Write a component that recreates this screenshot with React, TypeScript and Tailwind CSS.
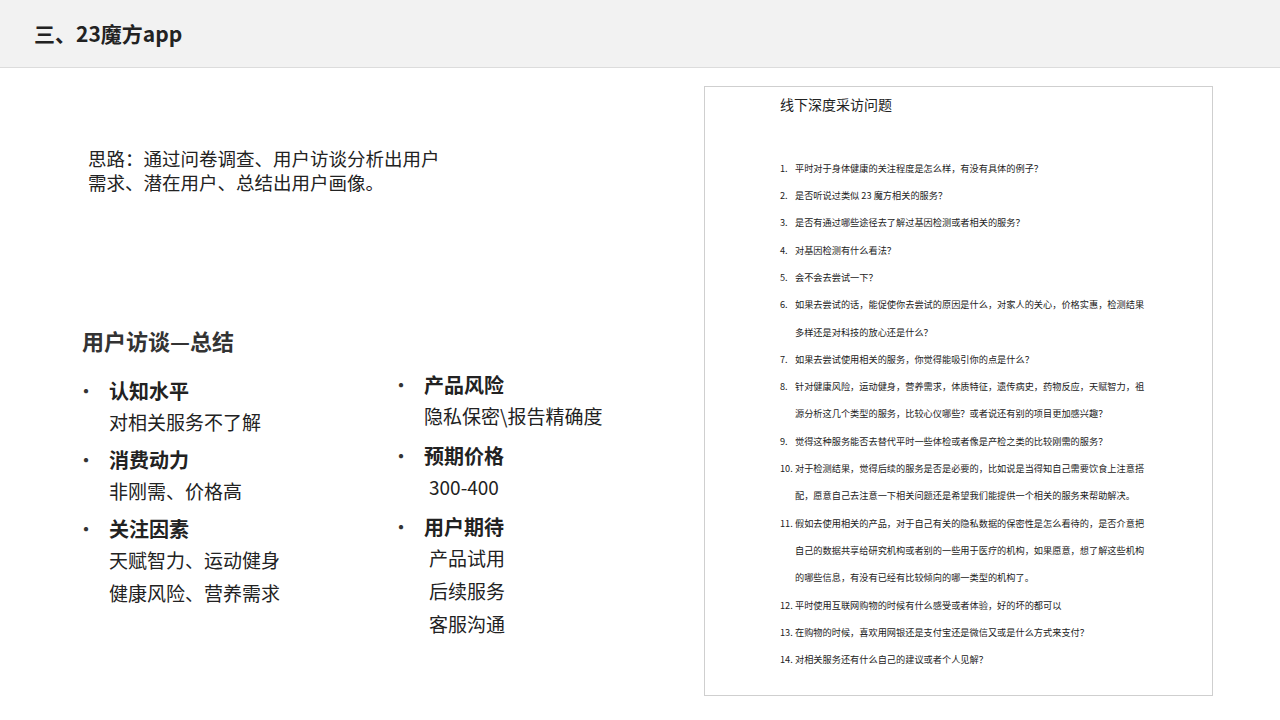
import React from "react";

const font = { fontFamily: '"Microsoft YaHei","Noto Sans CJK SC",sans-serif' };

type Q = { n: string; lines: string[] };

const questions: Q[] = [
  { n: "1.", lines: ["平时对于身体健康的关注程度是怎么样，有没有具体的例子？"] },
  { n: "2.", lines: ["是否听说过类似 23 魔方相关的服务？"] },
  { n: "3.", lines: ["是否有通过哪些途径去了解过基因检测或者相关的服务？"] },
  { n: "4.", lines: ["对基因检测有什么看法？"] },
  { n: "5.", lines: ["会不会去尝试一下？"] },
  { n: "6.", lines: ["如果去尝试的话，能促使你去尝试的原因是什么，对家人的关心，价格实惠，检测结果", "多样还是对科技的放心还是什么？"] },
  { n: "7.", lines: ["如果去尝试使用相关的服务，你觉得能吸引你的点是什么？"] },
  { n: "8.", lines: ["针对健康风险，运动健身，营养需求，体质特征，遗传病史，药物反应，天赋智力，祖", "源分析这几个类型的服务，比较心仪哪些？或者说还有别的项目更加感兴趣？"] },
  { n: "9.", lines: ["觉得这种服务能否去替代平时一些体检或者像是产检之类的比较刚需的服务？"] },
  { n: "10.", lines: ["对于检测结果，觉得后续的服务是否是必要的，比如说是当得知自己需要饮食上注意搭", "配，愿意自己去注意一下相关问题还是希望我们能提供一个相关的服务来帮助解决。"] },
  { n: "11.", lines: ["假如去使用相关的产品，对于自己有关的隐私数据的保密性是怎么看待的，是否介意把", "自己的数据共享给研究机构或者别的一些用于医疗的机构，如果愿意，想了解这些机构", "的哪些信息，有没有已经有比较倾向的哪一类型的机构了。"] },
  { n: "12.", lines: ["平时使用互联网购物的时候有什么感受或者体验，好的坏的都可以"] },
  { n: "13.", lines: ["在购物的时候，喜欢用网银还是支付宝还是微信又或是什么方式来支付？"] },
  { n: "14.", lines: ["对相关服务还有什么自己的建议或者个人见解？"] },
];

const Item = ({ title, lines, indent = false }: { title: string; lines: string[]; indent?: boolean }) => (
  <div className="flex">
    <div className="w-[27px] -ml-[6px] mr-[6px] text-[20px] leading-[28px] text-[#333]">•</div>
    <div>
      <div className="text-[20px] font-bold leading-[28px] text-[#222]">{title}</div>
      {lines.map((l, i) => (
        <div key={i} className={`text-[19px] leading-[33px] text-[#222] ${indent ? "pl-[5px]" : ""}`}>{l}</div>
      ))}
    </div>
  </div>
);

export default function App() {
  return (
    <div className="w-[1280px] h-[720px] bg-white overflow-hidden" style={font}>
      <div className="h-[68px] bg-[#f2f2f2] border-b border-[#dcdcdc] flex items-center pl-[34px]">
        <span className="text-[21px] font-bold text-[#222]">三、23魔方app</span>
      </div>
      <div className="flex">
        <div className="w-[704px] pl-[82px]">
          <div className="pl-[6px] pt-[78px] text-[18.5px] leading-[24px] text-[#222]">
            <div>思路：通过问卷调查、用户访谈分析出用户</div>
            <div>需求、潜在用户、总结出用户画像。</div>
          </div>
          <div className="mt-[130px] text-[22px] font-bold text-[#333]">用户访谈—总结</div>
          <div className="flex mt-[16px]">
            <div className="w-[315px] flex flex-col gap-[8px] pt-[4px]">
              <Item title="认知水平" lines={["对相关服务不了解"]} />
              <Item title="消费动力" lines={["非刚需、价格高"]} />
              <Item title="关注因素" lines={["天赋智力、运动健身", "健康风险、营养需求"]} />
            </div>
            <div className="flex flex-col gap-[10px] -mt-[2px]">
              <Item title="产品风险" lines={["隐私保密\\报告精确度"]} />
              <Item title="预期价格" lines={["300-400"]} indent />
              <Item title="用户期待" lines={["产品试用", "后续服务", "客服沟通"]} indent />
            </div>
          </div>
        </div>
        <div className="mt-[18px] w-[509px] h-[610px] border border-[#cfcfcf] pl-[75px] pt-[7px]">
          <div className="text-[14px] text-[#222]">线下深度采访问题</div>
          <div className="mt-[40px] text-[9.2px] text-[#222]">
            {questions.map((q) =>
              q.lines.map((l, i) => (
                <div key={q.n + i} className="flex h-[27.3px] items-center">
                  <span className="w-[15px]">{i === 0 ? q.n : ""}</span>
                  <span className="whitespace-nowrap">{l}</span>
                </div>
              ))
            )}
          </div>
        </div>
      </div>
    </div>
  );
}
